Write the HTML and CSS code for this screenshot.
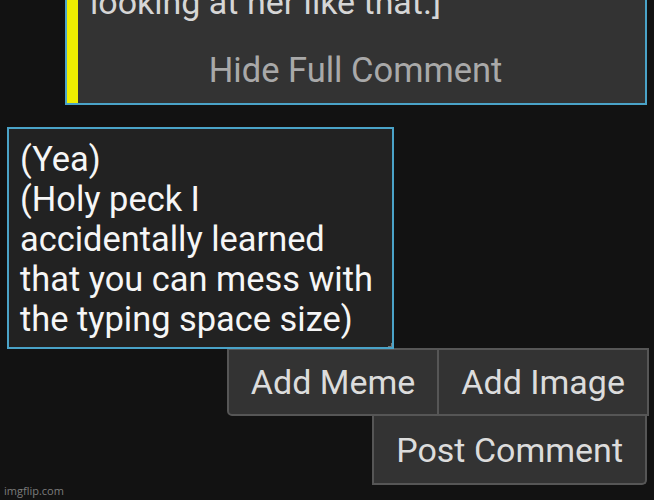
FILE: index.html
```html
<!DOCTYPE html>
<html lang="en">
<head>
    <meta charset="UTF-8">
    <meta name="viewport" content="width=device-width, initial-scale=1.0">
    <title>Comments</title>
    <link rel="stylesheet" href="styles.css">
</head>
<body>
    <div class="thread">
        <div class="comment">
            <div class="comment-body">
                <div class="comment-text">looking at her like that.]</div>
                <div class="hide-full">Hide Full Comment</div>
            </div>
        </div>

        <div class="reply">
            <div class="reply-box">(Yea)<br>(Holy peck I accidentally learned that you can mess with the typing space size)</div>
            <span class="resize-grip"></span>
        </div>

        <div class="actions">
            <div class="btn-row">
                <button class="btn">Add Meme</button>
                <button class="btn btn-right">Add Image</button>
            </div>
            <button class="btn post-btn">Post Comment</button>
        </div>
    </div>

    <div class="watermark">imgflip.com</div>
</body>
</html>
```

FILE: styles.css
```css
* {
    margin: 0;
    padding: 0;
    box-sizing: border-box;
}

body {
    font-family: Roboto, "Liberation Sans", sans-serif;
    background: #121212;
    color: white;
    width: 654px;
    height: 500px;
    overflow: hidden;
    position: relative;
}

.thread {
    display: flex;
    flex-direction: column;
}

.comment {
    margin-left: 65px;
    width: 582px;
    height: 140px;
    margin-top: -35px;
    border: 2px solid #4aa3c8;
    background: #333;
}

.comment-body {
    height: 100%;
    border-left: 11px solid #eeee00;
    padding-left: 12px;
    display: flex;
    flex-direction: column;
}

.comment-text {
    font-size: 34px;
    line-height: 40px;
    color: #d6d6d6;
    padding-top: 15px;
}

.hide-full {
    font-size: 34.5px;
    line-height: 40px;
    color: #a9a9a9;
    text-align: center;
    padding-right: 24px;
    margin-top: 28px;
}

.reply {
    position: relative;
    margin-top: 22px;
    margin-left: 7px;
    width: 387px;
}

.reply-box {
    height: 222px;
    background: #222;
    border: 2px solid #4aa3c8;
    padding: 10px 11px;
    font-size: 34.4px;
    line-height: 40px;
    color: #f6f6f6;
}

.resize-grip {
    position: absolute;
    right: 2px;
    bottom: 2px;
    width: 4px;
    height: 4px;
    border-right: 1px solid #777;
    border-bottom: 1px solid #777;
}

.actions {
    display: flex;
    flex-direction: column;
    align-items: flex-end;
    margin-top: -1px;
    padding-right: 5px;
}

.btn-row {
    display: flex;
}

.btn {
    font-family: Roboto, "Liberation Sans", sans-serif;
    font-size: 34px;
    line-height: 40px;
    color: #dcdcdc;
    background: #333;
    border: 2px solid #565656;
    padding: 12px 22px;
    cursor: pointer;
}

.btn-row .btn {
    border-radius: 0 0 0 5px;
    height: 68px;
}

.btn-row .btn-right {
    border-left: none;
    border-radius: 0;
}

.post-btn {
    height: 69px;
    margin-right: 2px;
    border-top: none;
    border-radius: 0 0 5px 0;
    padding: 12px 22px;
}

.watermark {
    position: absolute;
    left: 4px;
    bottom: 2px;
    font-family: "Open Sans", "Liberation Sans", sans-serif;
    font-size: 11px;
    color: #7c7c7c;
}
```
